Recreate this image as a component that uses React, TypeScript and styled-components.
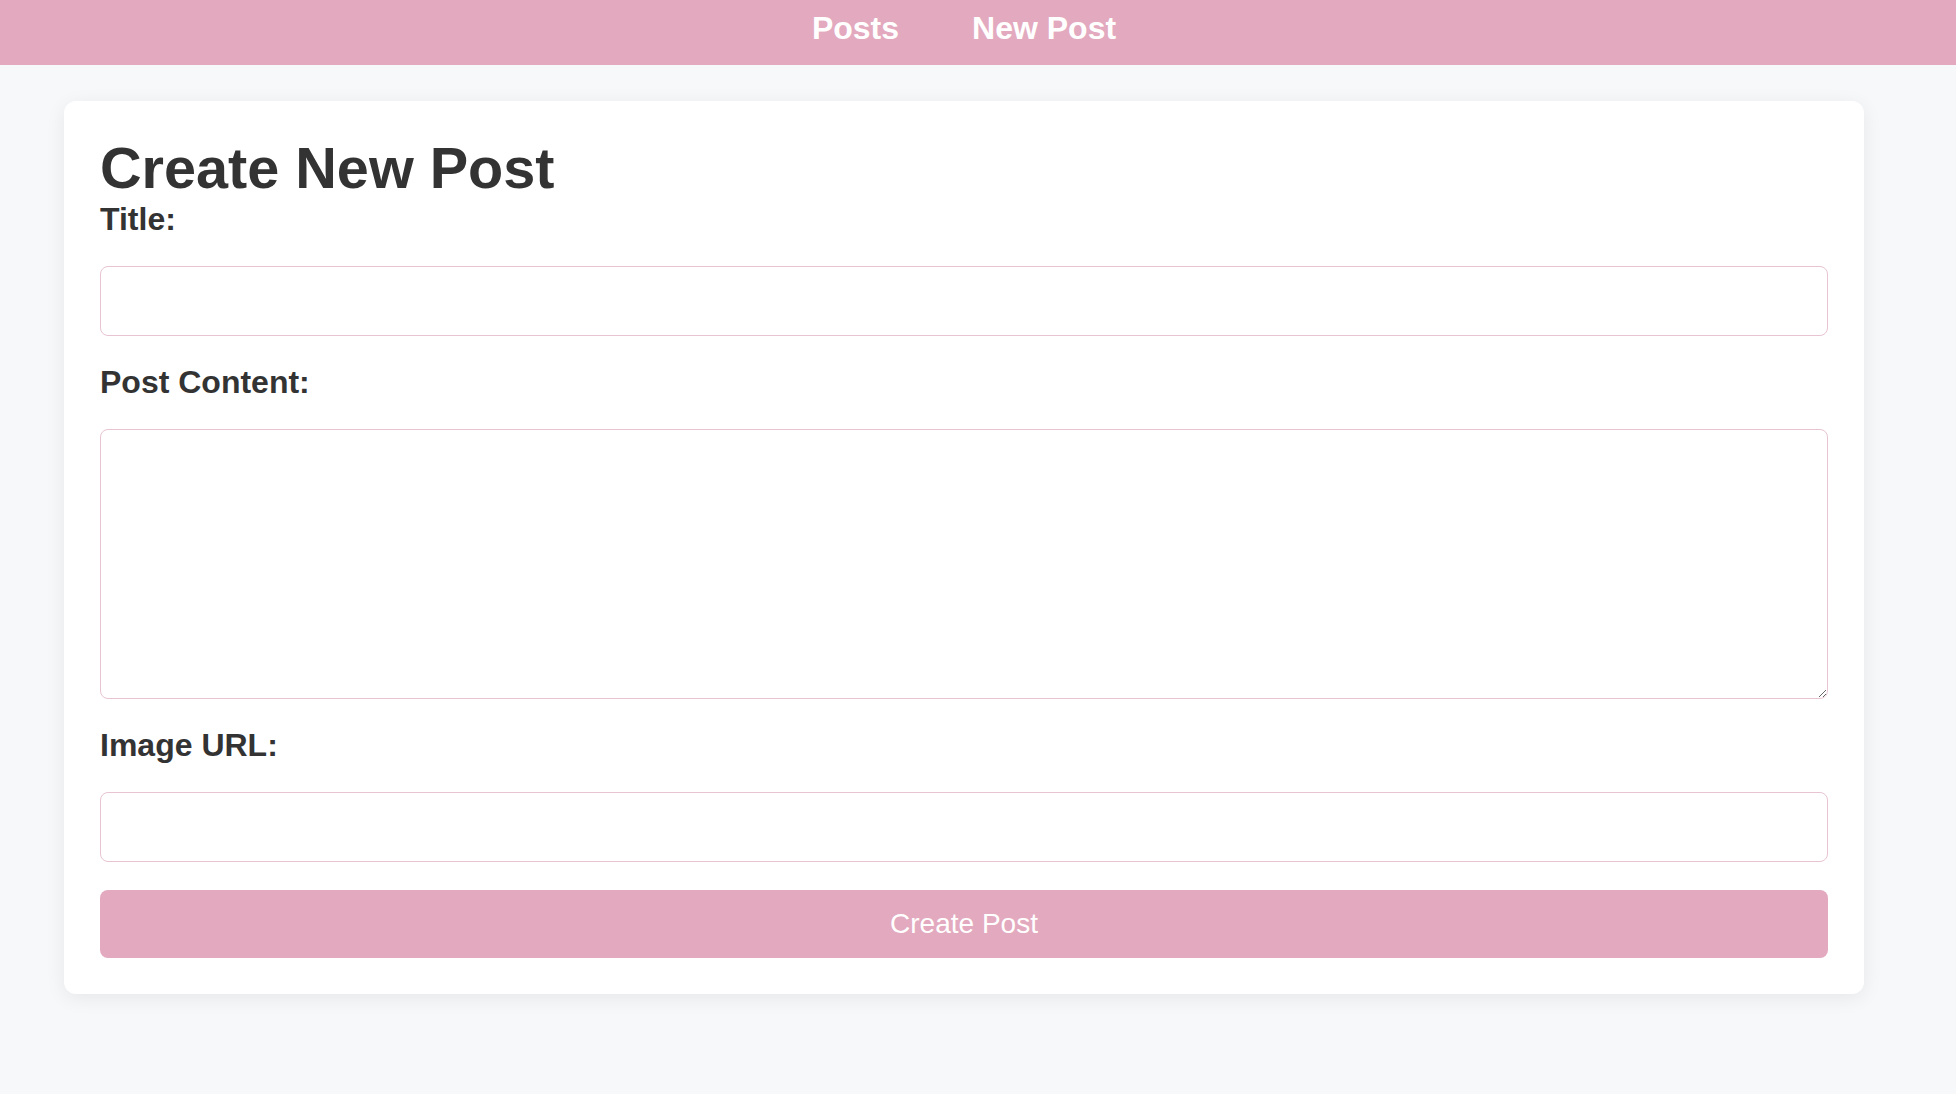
import React from "react";
import styled, { createGlobalStyle } from "styled-components";

const GlobalStyle = createGlobalStyle`
  * { box-sizing: border-box; }
  html, body { margin: 0; padding: 0; }
  body {
    background: #f7f8fa;
    font-family: "Liberation Sans", Arial, sans-serif;
    color: #333333;
  }
`;

const Nav = styled.nav`
  height: 65px;
  background: #e3a9be;
  display: flex;
  justify-content: center;
  align-items: flex-start;
  gap: 73px;
  padding: 10px 28px 0 0;
`;

const NavLink = styled.a`
  color: #ffffff;
  font-size: 32px;
  font-weight: 700;
  text-decoration: none;
  line-height: normal;
  cursor: pointer;
`;

const Main = styled.main`
  padding: 36px 28px 36px 0;
  display: flex;
  justify-content: center;
`;

const Card = styled.section`
  width: 100%;
  max-width: 1800px;
  background: #ffffff;
  border-radius: 12px;
  box-shadow: 0 4px 20px rgba(0, 0, 0, 0.07);
  padding: 34px 36px 36px;
`;

const Heading = styled.h1`
  margin: 0;
  font-size: 57.6px;
  font-weight: 700;
  line-height: normal;
  color: #333333;
`;

const Form = styled.form`
  display: flex;
  flex-direction: column;
  gap: 28px;
`;

const Label = styled.label`
  display: block;
  font-size: 32px;
  font-weight: 700;
  line-height: normal;
  color: #333333;
`;

const Input = styled.input`
  display: block;
  width: 100%;
  height: 70px;
  border: 1px solid #e8c4d2;
  border-radius: 8px;
  padding: 0 16px;
  font-size: 28px;
  font-family: inherit;
  background: #ffffff;
  outline: none;
`;

const TextArea = styled.textarea`
  display: block;
  width: 100%;
  height: 270px;
  border: 1px solid #e8c4d2;
  border-radius: 8px;
  padding: 16px;
  font-size: 28px;
  font-family: inherit;
  background: #ffffff;
  resize: vertical;
  outline: none;
`;

const SubmitButton = styled.button`
  display: block;
  width: 100%;
  height: 68px;
  border: none;
  border-radius: 8px;
  background: #e3a9be;
  color: #ffffff;
  font-family: "Liberation Sans", Arial, sans-serif;
  font-size: 28px;
  font-weight: 400;
  cursor: pointer;
`;

export default function App() {
  return (
    <>
      <GlobalStyle />
      <Nav>
        <NavLink>Posts</NavLink>
        <NavLink>New Post</NavLink>
      </Nav>
      <Main>
        <Card>
          <Heading>Create New Post</Heading>
          <Form onSubmit={(e) => e.preventDefault()}>
            <Label htmlFor="title">Title:</Label>
            <Input id="title" type="text" />
            <Label htmlFor="content">Post Content:</Label>
            <TextArea id="content" />
            <Label htmlFor="image">Image URL:</Label>
            <Input id="image" type="text" />
            <SubmitButton type="submit">Create Post</SubmitButton>
          </Form>
        </Card>
      </Main>
    </>
  );
}
